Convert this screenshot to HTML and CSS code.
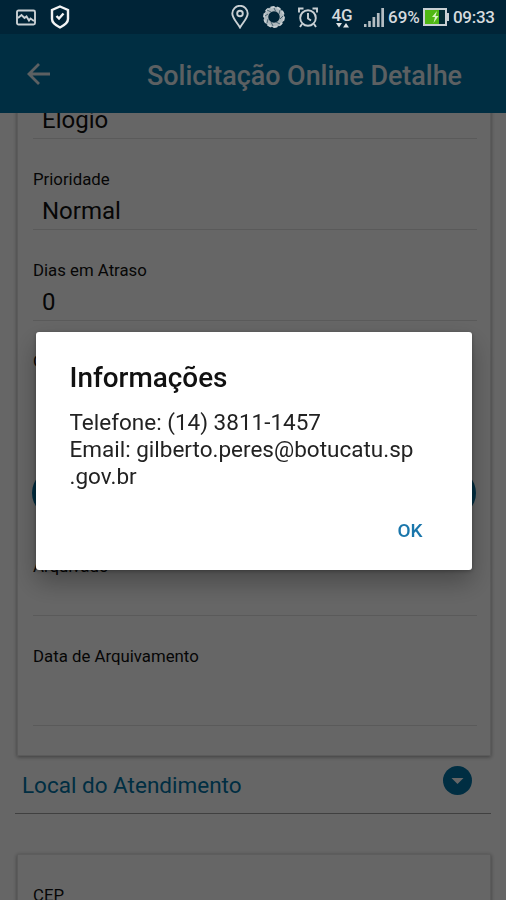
FILE: index.html
```html
<!DOCTYPE html>
<html lang="pt-BR">
<head>
<meta charset="UTF-8">
<meta name="viewport" content="width=device-width, initial-scale=1.0">
<title>Solicitação Online Detalhe</title>
<link rel="stylesheet" href="styles.css">
</head>
<body>
    <!-- Status bar -->
    <div class="statusbar">
        <div class="status-left">
            <svg width="20" height="17" viewBox="0 0 20 17" fill="none" stroke="#c9d0d4" stroke-width="1.9">
                <rect x="1" y="1.5" width="18" height="14" rx="1.5"/>
                <path d="M2 9l3.500-3 3 3 2-1.500 2.500 4 1.500-2 3.500 2.500"/>
            </svg>
            <svg width="20" height="24" viewBox="0 0 20 24" fill="none" stroke="#f2f4f5" stroke-width="2.400">
                <path d="M10 1.500L18 5v9c0 4-4 6.500-8 8.500-4-2-8-4.500-8-8.500V5z"/>
                <path d="M6.500 11l2.500 2.500 4.500-5"/>
            </svg>
        </div>
        <div class="status-right">
            <svg class="pin" width="18" height="24" viewBox="0 0 18 24" fill="none" stroke="#c9d0d4" stroke-width="1.900">
                <path d="M9 22.500C6 17.500 1.300 13 1.300 8.500a7.700 7.700 0 0 1 15.400 0C16.700 13 12 17.500 9 22.500z"/>
                <circle cx="9" cy="8.500" r="2.800"/>
            </svg>
            <svg class="ring" width="24" height="22" viewBox="0 0 24 22" fill="none">
                <circle cx="12" cy="11" r="8" stroke="#aeb8bd" stroke-width="4.500"/>
                <circle cx="12" cy="11" r="10" stroke="#c9d0d4" stroke-width="1.800" stroke-dasharray="4 2.200"/>
                <path d="M5 4l4 2M12 2l2 4M18 4l-1 4M21 10l-3 3M18 18l-4-2M11 20l-2-4M5 17l1-4M3 10l3-2" stroke="#4a6472" stroke-width="1"/>
            </svg>
            <svg class="alarm" width="20" height="21" viewBox="0 0 20 21" fill="none" stroke="#c9d0d4" stroke-width="1.900">
                <circle cx="10" cy="11" r="7.800"/>
                <path d="M10 6v5.500l3 2M1 5.500V1.500h4.500M19 5.500V1.500h-4.500M4 17l-2 3M16 17l2 3"/>
            </svg>
            <div class="network">
                <span>4G</span>
                <svg width="13" height="5" viewBox="0 0 13 5" fill="#dfe4e6">
                    <path d="M0 0h6L3 4.500zM10 0L13 4.500H7z"/>
                </svg>
            </div>
            <svg class="signal" width="20" height="19" viewBox="0 0 20 19" fill="#b4bdc2">
                <path d="M0 16h2.500v3H0zM4.200 13h2.600v6H4.200zM8.500 9h2.700v10H8.500zM12.900 5h2.700v14h-2.700zM17.300 0H20v19h-2.700z"/>
            </svg>
            <span class="percent">69%</span>
            <svg class="battery" width="26" height="18" viewBox="0 0 26 18">
                <rect x="1" y="1" width="22" height="16" fill="#032d36" stroke="#c9d0d4" stroke-width="2"/>
                <rect x="23.500" y="5" width="2.500" height="8" fill="#c9d0d4"/>
                <rect x="2" y="2" width="14" height="14" fill="#4fb814"/>
                <path d="M14 3l-5 6h3l-1.500 6 5-7h-3z" fill="#d8f4c4"/>
            </svg>
            <span class="clock">09:33</span>
        </div>
    </div>

    <!-- Screen behind the dialog -->
    <div class="screen">
        <div class="toolbar">
            <svg class="back" width="23" height="22" viewBox="0 0 23 22" fill="none" stroke="#fff" stroke-width="2.800">
                <path d="M12 1L2 11l10 10M2 11h21"/>
            </svg>
            <h1>Solicitação Online Detalhe</h1>
        </div>

        <div class="content">
            <div class="card">
                <div class="field">
                    <label>Tipo</label>
                    <p>Elogio</p>
                </div>
                <div class="field">
                    <label>Prioridade</label>
                    <p>Normal</p>
                </div>
                <div class="field">
                    <label>Dias em Atraso</label>
                    <p>0</p>
                </div>
                <div class="field origin">
                    <label>Origem</label>
                </div>
                <div class="pill"></div>
                <div class="field filed">
                    <label>Arquivado</label>
                </div>
                <div class="field last">
                    <label>Data de Arquivamento</label>
                </div>
            </div>

            <div class="section">
                <h2>Local do Atendimento</h2>
                <svg width="29" height="29" viewBox="0 0 29 29">
                    <circle cx="14.500" cy="14.500" r="14.500" fill="#0073a6"/>
                    <path d="M8.500 12h12l-6 6z" fill="#fff"/>
                </svg>
            </div>

            <div class="card address">
                <div class="field">
                    <label>CEP</label>
                </div>
            </div>
        </div>
    </div>

    <!-- Dialog -->
    <div class="overlay">
        <div class="dialog">
            <h3>Informações</h3>
            <p>Telefone: (14) 3811-1457<br>Email: gilberto.peres@botucatu.sp<br>.gov.br</p>
            <button class="ok">OK</button>
        </div>
    </div>
</body>
</html>
```

FILE: styles.css
```css
* {
    box-sizing: border-box;
}

body, html {
    height: 100%;
    margin: 0;
    overflow: hidden;
    font-family: Roboto, 'Liberation Sans', sans-serif;
}

h1, h2, h3, p {
    margin: 0;
    font-weight: normal;
}

svg {
    display: block;
    flex-shrink: 0;
}

/* Status bar */
.statusbar {
    position: relative;
    z-index: 3;
    height: 34px;
    padding: 0 10px 0 16px;
    display: flex;
    justify-content: space-between;
    background: #002437;
    color: #d5dadd;
}

.status-left, .status-right {
    display: flex;
    align-items: center;
    height: 34px;
}

.status-left {
    gap: 14px;
}

.pin {
    margin-right: 13px;
}

.ring {
    margin-right: 12px;
}

.alarm {
    margin-right: 13px;
}

.network {
    display: flex;
    flex-direction: column;
    align-items: center;
    width: 22px;
    margin-right: 11px;
    padding-top: 2px;
    font-size: 17px;
    font-weight: 500;
    line-height: 15px;
}

.signal {
    margin-right: 4px;
}

.percent {
    width: 32px;
    margin-right: 3px;
    font-size: 17px;
    font-weight: 500;
    white-space: nowrap;
}

.battery {
    margin-right: 4px;
}

.clock {
    width: 43px;
    font-size: 17px;
    font-weight: 500;
    letter-spacing: -0.3px;
    white-space: nowrap;
}

/* Screen */
.screen {
    height: 866px;
    overflow: hidden;
    background: #fff;
}

.toolbar {
    position: relative;
    z-index: 1;
    height: 79px;
    padding: 4px 44px 0 27px;
    display: flex;
    align-items: center;
    justify-content: space-between;
    background: #0073a6;
    color: #fff;
}

.toolbar h1 {
    font-size: 26.9px;
    font-weight: 500;
    white-space: nowrap;
}

.back, .toolbar h1 {
    opacity: 0.9;
}

.back {
    margin-top: -3px;
}

.content {
    margin-top: -65px;
    padding: 0 15px;
}

/* Cards and fields */
.card {
    height: 708px;
    margin: 0 0 0 2px;
    padding: 0 13px 0 15px;
    border: 1px solid #e4e4e4;
    border-top: none;
    box-shadow: 0 1px 4px rgba(0, 0, 0, 0.4);
}

.field {
    height: 91px;
    padding-top: 31px;
    border-bottom: 1px solid #e0e0e0;
}

.field label {
    display: block;
    color: #111;
    font-size: 16.8px;
    line-height: 18px;
}

.field p {
    padding: 9px 0 0 9px;
    color: #111;
    font-size: 24px;
    line-height: 28px;
}

.origin {
    border-bottom: none;
}

.pill {
    height: 48px;
    margin: 57px 1px 0 -1px;
    border-radius: 24px;
    background: #0073a6;
}

.filed {
    height: 99px;
    padding-top: 40px;
}

.last {
    height: 110px;
}

/* Section title */
.section {
    display: flex;
    align-items: center;
    justify-content: space-between;
    height: 58px;
    padding: 0 19px 0 7px;
    border-bottom: 1px solid #a0a0a0;
}

.section svg {
    margin-top: -8px;
}

.section h2 {
    color: #0073a6;
    font-size: 22.5px;
    line-height: 26px;
    padding-top: 1px;
}

.address {
    margin-top: 40px;
    border-top: 1px solid #e8e8e8;
}

/* Dialog */
.overlay {
    position: fixed;
    inset: 0;
    z-index: 2;
    background: rgba(0, 0, 0, 0.6);
    display: flex;
    justify-content: center;
    align-items: flex-start;
    padding: 332px 0 0 1px;
}

.dialog {
    width: 436px;
    height: 238px;
    padding: 30px 34px 0;
    border-radius: 3px;
    background: #fff;
    color: #111;
    box-shadow: 0 12px 26px rgba(0, 0, 0, 0.3), 0 1px 4px rgba(0, 0, 0, 0.3);
}

.dialog h3 {
    font-size: 27.9px;
    font-weight: 500;
    line-height: 32px;
}

.dialog p {
    padding-top: 15px;
    color: #222;
    font-size: 22.5px;
    line-height: 27px;
    white-space: nowrap;
}

.ok {
    display: block;
    margin: 30px 15px 0 auto;
    padding: 0;
    border: none;
    background: none;
    color: #1a76ab;
    font: 500 19px/22px Roboto, 'Liberation Sans', sans-serif;
}
```
